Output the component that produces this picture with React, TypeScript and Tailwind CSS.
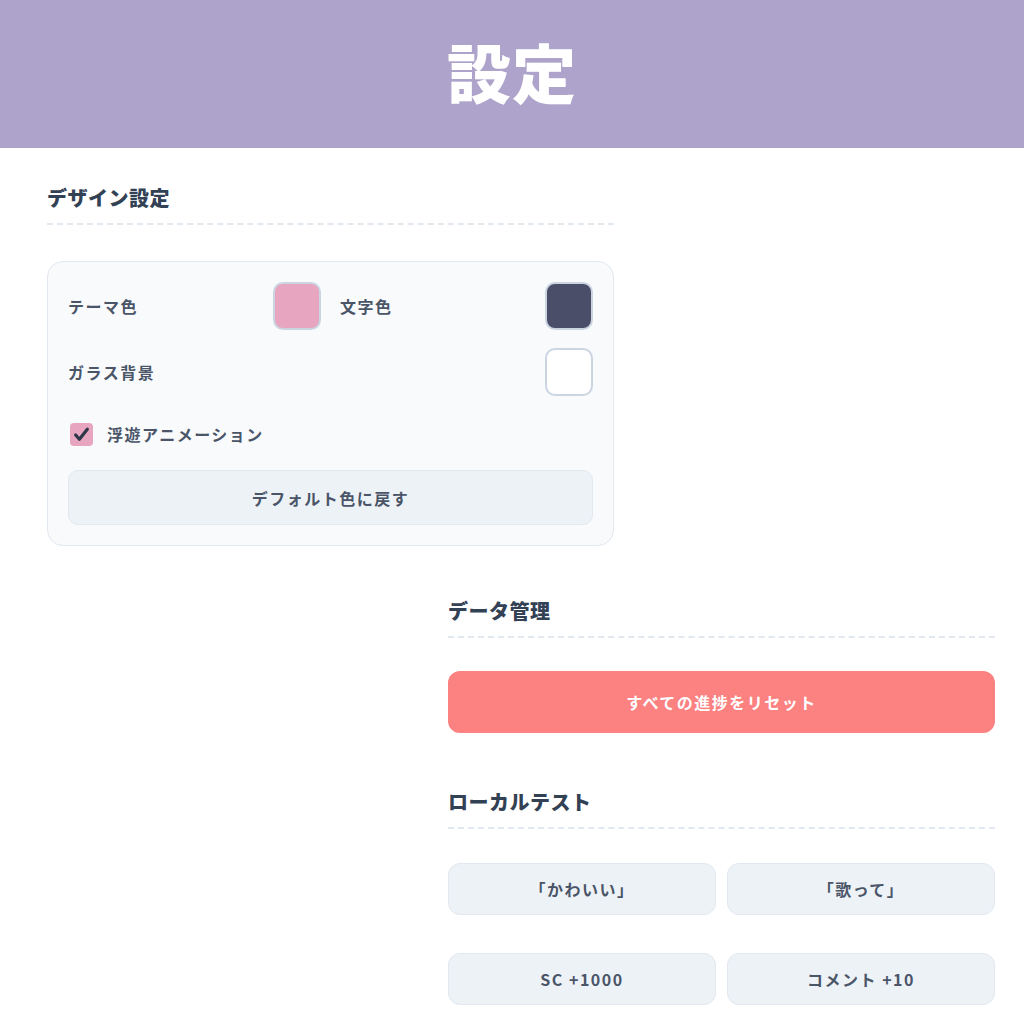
import React from "react";

const font = { fontFamily: '"Noto Sans CJK JP", "Noto Sans", sans-serif' };

// section heading with dashed underline
const SectionTitle = ({ label }: { label: string }) => (
  <h2 className="text-[20px] leading-[28px] font-black text-[#334155] tracking-[0.5px] pb-[11px] border-b-2 border-dashed border-[#e2e8f0]">
    {label}
  </h2>
);

const Swatch = ({ color }: { color: string }) => (
  <div
    className={`w-12 h-12 rounded-[10px] border-2 border-[#cbd5e1] ${color}`}
  />
);

const TestButton = ({ label }: { label: string }) => (
  <button className="h-[52px] rounded-[12px] bg-[#edf2f7] border border-[#e2e8f0] text-[16px] font-bold tracking-[1.5px] text-[#4a5568]">
    {label}
  </button>
);

const App = () => {
  return (
    <div className="min-h-screen bg-white pb-10" style={font}>
      <header className="h-[148px] bg-[#aea3cb] flex items-center justify-center pb-[8px]">
        <h1 className="text-[64px] leading-none font-black text-white tracking-[1px]">
          設定
        </h1>
      </header>

      {/* Design settings */}
      <section className="ml-[47px] w-[567px] pt-[36px]">
        <SectionTitle label="デザイン設定" />
        <div className="mt-[36px] rounded-[16px] border border-[#e2e8f0] bg-[#f8fafc] p-[20px]">
          <div className="grid grid-cols-2 gap-x-[19px] gap-y-[18px]">
            <div className="flex items-center justify-between">
              <span className="text-[16px] font-bold tracking-[1.5px] text-[#4a5568]">テーマ色</span>
              <Swatch color="bg-[#e8a5c0]" />
            </div>
            <div className="flex items-center justify-between">
              <span className="text-[16px] font-bold tracking-[1.5px] text-[#4a5568]">文字色</span>
              <Swatch color="bg-[#4a4e69]" />
            </div>
            <div className="col-span-2 flex items-center justify-between">
              <span className="text-[16px] font-bold tracking-[1.5px] text-[#4a5568]">ガラス背景</span>
              <Swatch color="bg-white" />
            </div>
          </div>
          <label className="mt-[26px] h-[24px] flex items-center gap-[14px] pl-[2px]">
            <span className="w-[23px] h-[23px] rounded-[4px] bg-[#e8a5c0] flex items-center justify-center">
              <svg width="17" height="17" viewBox="0 0 16 16" fill="none">
                <path
                  d="M2.5 8.5 L6 12.5 L13.5 3"
                  stroke="#2d3748"
                  strokeWidth="3"
                  strokeLinecap="round"
                  strokeLinejoin="round"
                />
              </svg>
            </span>
            <span className="text-[16px] font-bold tracking-[1.5px] text-[#4a5568]">浮遊アニメーション</span>
          </label>
          <button className="mt-[24px] w-full h-[55px] rounded-[10px] bg-[#edf2f7] border border-[#e2e8f0] text-[16px] font-bold tracking-[1.5px] text-[#4a5568]">
            デフォルト色に戻す
          </button>
        </div>
      </section>

      {/* Data management */}
      <section className="ml-[448px] w-[547px] mt-[51px]">
        <SectionTitle label="データ管理" />
        <button className="mt-[33px] w-full h-[62px] rounded-[12px] bg-[#fc8181] text-white text-[16px] font-bold tracking-[1.5px]">
          すべての進捗をリセット
        </button>
      </section>

      {/* Local test */}
      <section className="ml-[448px] w-[547px] mt-[55px]">
        <SectionTitle label="ローカルテスト" />
        <div className="mt-[34px] grid grid-cols-2 gap-x-[11px] gap-y-[38px]">
          <TestButton label="「かわいい」" />
          <TestButton label="「歌って」" />
          <TestButton label="SC +1000" />
          <TestButton label="コメント +10" />
        </div>
      </section>
    </div>
  );
};

export default App;
